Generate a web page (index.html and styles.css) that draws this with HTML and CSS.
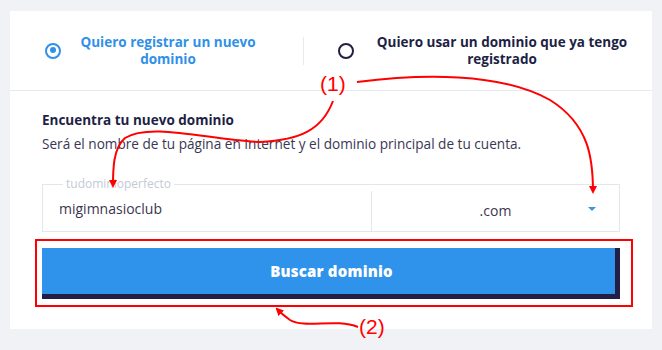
FILE: index.html
```html
<!DOCTYPE html>
<html lang="es">
<head>
<meta charset="utf-8">
<link rel="stylesheet" href="styles.css">
</head>
<body>
<div class="card">
  <div class="options">
    <div class="option option-left">
      <span class="radio radio-on"></span>
      <span class="opt-text opt-text-blue">Quiero registrar un nuevo dominio</span>
    </div>
    <div class="option option-right">
      <span class="radio radio-off"></span>
      <span class="opt-text opt-text-dark">Quiero usar un dominio que ya tengo registrado</span>
    </div>
  </div>
  <div class="body">
    <h2 class="title">Encuentra tu nuevo dominio</h2>
    <p class="subtitle">Será el nombre de tu página en Internet y el dominio principal de tu cuenta.</p>
    <fieldset class="field">
      <legend class="legend">tudominioperfecto</legend>
      <div class="name">migimnasioclub</div>
      <div class="tld"><span class="tld-text">.com</span><span class="caret"></span></div>
    </fieldset>
    <button class="search">Buscar dominio</button>
  </div>
</div>
<svg class="notes" width="662" height="350" viewBox="0 0 662 350">
  <defs>
    <marker id="ah" markerWidth="8" markerHeight="8" refX="6" refY="4" orient="auto" markerUnits="userSpaceOnUse">
      <path d="M0,0 L8,4 L0,8 Z" fill="#ff0000"/>
    </marker>
  </defs>
  <text x="320" y="91" class="note-text">(1)</text>
  <text x="359" y="334" class="note-text">(2)</text>
  <path d="M333,101 C322,130 300,140 260,142 C210,140 150,122 125,138 C113,148 113,170 113,186" class="note-line" marker-end="url(#ah)"/>
  <path d="M357,82 C420,74 500,72 550,100 C590,125 593,160 593,192" class="note-line" marker-end="url(#ah)"/>
  <path d="M358,327 C335,318 305,329 290,320 C284,316 280,312 277,309" class="note-line" marker-end="url(#ah)"/>
  <rect x="36" y="240" width="596" height="66" class="note-rect"/>
</svg>
</body>
</html>
```
FILE: styles.css
```css
html, body {
  margin: 0;
  padding: 0;
}
body {
  background: #f0f2f6;
  width: 662px;
  height: 350px;
  position: relative;
  overflow: hidden;
  font-family: "Open Sans", "Noto Sans", sans-serif;
  color: #211f45;
}
.card {
  margin: 11px 0 0 10px;
  width: 642px;
  height: 318px;
  background: #ffffff;
  box-sizing: border-box;
}
.options {
  display: flex;
  height: 80px;
  border-bottom: 1px solid #e6e9ee;
  box-sizing: border-box;
  align-items: center;
}
.option {
  display: flex;
  align-items: center;
}
.option-left {
  width: 294px;
  padding-left: 35px;
  box-sizing: border-box;
  border-right: 1px solid #e6e9ee;
  height: 28px;
}
.option-right {
  padding-left: 34px;
}
.radio {
  width: 16px;
  height: 16px;
  border-radius: 50%;
  box-sizing: border-box;
  flex: none;
  position: relative;
}
.radio-on {
  border: 2.5px solid #3090e8;
}
.radio-on::after {
  content: "";
  position: absolute;
  left: 2.5px;
  top: 2.5px;
  width: 6px;
  height: 6px;
  border-radius: 50%;
  background: #3090e8;
}
.radio-off {
  border: 2.5px solid #211f45;
}
.opt-text {
  font-weight: 700;
  font-size: 13.5px;
  line-height: 17px;
  text-align: center;
}
.opt-text-blue {
  color: #3090e8;
  width: 190px;
  margin-left: 12px;
}
.opt-text-dark {
  color: #211f45;
  width: 276px;
  margin-left: 10px;
}
.body {
  padding: 19px 32px 0 32px;
}
.title {
  margin: 0;
  font-size: 13.5px;
  font-weight: 700;
  line-height: 20px;
  color: #211f45;
}
.subtitle {
  margin: 4px 0 0 0;
  font-size: 13.6px;
  line-height: 20px;
  color: #3a3752;
}
.field {
  margin: 23px 0 0 0;
  padding: 0;
  border: 1px solid #e3e6ea;
  display: flex;
  height: 55px;
  box-sizing: border-box;
  min-width: 0;
}
.legend {
  margin-left: 20px;
  padding: 0 3px;
  font-size: 12px;
  line-height: 14px;
  color: #c3cad5;
}
.name {
  width: 329px;
  border-right: 1px solid #e3e6ea;
  box-sizing: border-box;
  padding-left: 16px;
  font-size: 14px;
  line-height: 36px;
  color: #3b3550;
}
.tld {
  flex: 1;
  display: flex;
  align-items: center;
  justify-content: center;
  position: relative;
  font-size: 14px;
  line-height: 36px;
  color: #3b3550;
}
.caret {
  position: absolute;
  right: 23px;
  top: 16px;
  width: 0;
  height: 0;
  border-left: 4px solid transparent;
  border-right: 4px solid transparent;
  border-top: 4px solid #3f94e6;
}
.search {
  display: block;
  margin-top: 16px;
  width: 578px;
  height: 51px;
  background: #2f93ec;
  border: none;
  border-right: 5px solid #211f45;
  border-bottom: 5px solid #211f45;
  color: #ffffff;
  font-family: "Open Sans", sans-serif;
  font-weight: 800;
  font-size: 15px;
  letter-spacing: 0.2px;
  padding: 0 0 0 6px;
  box-sizing: border-box;
}
.notes {
  position: absolute;
  left: 0;
  top: 0;
  pointer-events: none;
}
.note-text {
  font-family: "Liberation Sans", Arial, sans-serif;
  font-size: 21px;
  fill: #ff0000;
}
.note-line {
  fill: none;
  stroke: #ff0000;
  stroke-width: 2;
}
.note-rect {
  fill: none;
  stroke: #ff0000;
  stroke-width: 2;
}
```
